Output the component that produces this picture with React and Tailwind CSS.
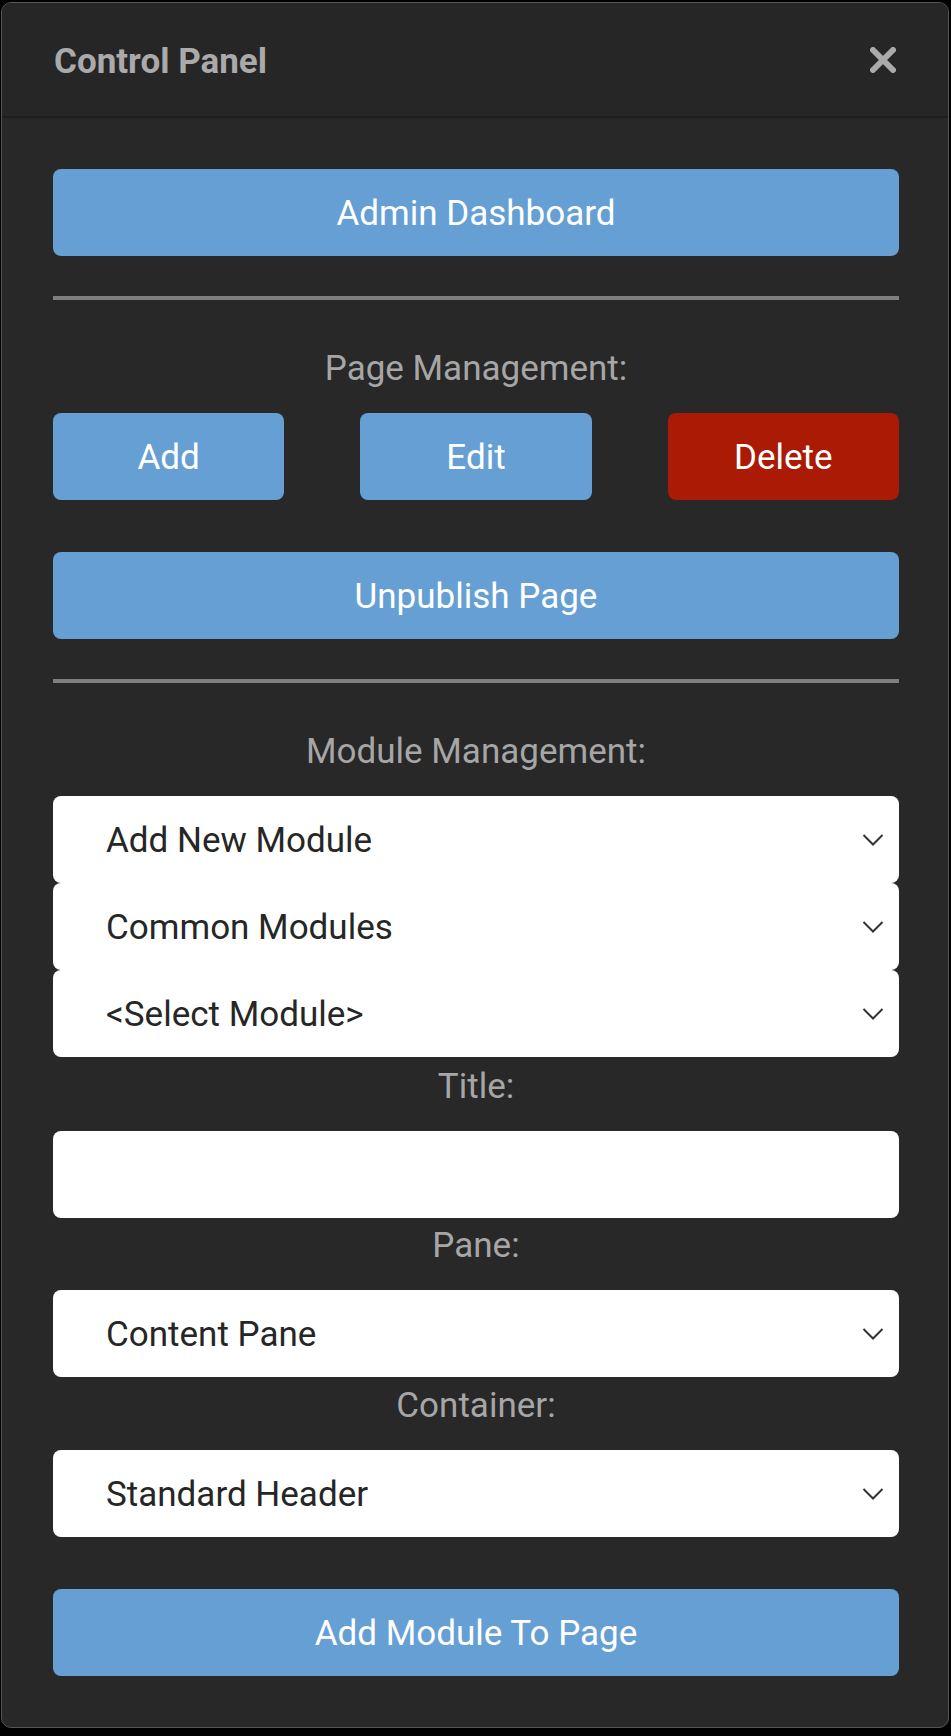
import React from 'react';

function Chevron() {
    return (
        <svg width="22" height="14" viewBox="0 0 22 14" className="shrink-0">
            <path d="M1.5 2 L11 11.5 L20.5 2" fill="none" stroke="#333333" strokeWidth="2" />
        </svg>
    );
}

function SelectBox({ label }) {
    return (
        <div className="h-[87px] bg-white rounded-[8px] flex items-center justify-between pl-[53px] pr-[15px] text-[#262626]">
            <span className="pt-[4px]">{label}</span>
            <Chevron />
        </div>
    );
}

function BlueButton({ children, className = '' }) {
    return (
        <div className={'h-[87px] pt-[4px] bg-[#659fd4] rounded-[8px] flex items-center justify-center text-white ' + className}>
            {children}
        </div>
    );
}

function Label({ children, className = '' }) {
    return (
        <div className={'h-[42px] pt-[4px] flex items-center justify-center text-[#a6a6a6] ' + className}>
            {children}
        </div>
    );
}

export default function App() {
    return (
        <div className="w-[951px] h-[1736px] bg-black pt-[2px] pl-[1px] font-['Roboto',sans-serif] text-[35px]">
            <div className="w-[948px] bg-[#282828] border border-[#555555] rounded-[10px] overflow-hidden">
                <div className="h-[115px] bg-[#262626] border-b-2 border-[#1e1e1e] flex items-center justify-between pl-[52px] pr-[52px]">
                    <span className="font-bold text-[#aaaaaa] pt-[6px]">Control Panel</span>
                    <svg width="26" height="26" viewBox="0 0 26 26">
                        <path d="M3 3 L23 23 M23 3 L3 23" stroke="#aaaaaa" strokeWidth="6" strokeLinecap="round" />
                    </svg>
                </div>
                <div className="pl-[51px] pr-[49px] pt-[51px] pb-[51px]">
                    <BlueButton>Admin Dashboard</BlueButton>
                    <div className="mt-[40px] h-[4px] bg-[#7f7f7f]" />
                    <Label className="mt-[46px]">Page Management:</Label>
                    <div className="mt-[25px] grid grid-cols-3 gap-x-[76px]">
                        <BlueButton>Add</BlueButton>
                        <BlueButton>Edit</BlueButton>
                        <div className="h-[87px] pt-[4px] bg-[#aa1a05] rounded-[8px] flex items-center justify-center text-white">
                            Delete
                        </div>
                    </div>
                    <BlueButton className="mt-[52px]">Unpublish Page</BlueButton>
                    <div className="mt-[40px] h-[4px] bg-[#7f7f7f]" />
                    <Label className="mt-[46px]">Module Management:</Label>
                    <div className="mt-[25px] flex flex-col">
                        <SelectBox label="Add New Module" />
                        <SelectBox label="Common Modules" />
                        <SelectBox label="<Select Module>" />
                    </div>
                    <Label className="mt-[7px]">Title:</Label>
                    <div className="mt-[25px] h-[87px] bg-white rounded-[8px]" />
                    <Label className="mt-[5px]">Pane:</Label>
                    <div className="mt-[25px]">
                        <SelectBox label="Content Pane" />
                    </div>
                    <Label className="mt-[6px]">Container:</Label>
                    <div className="mt-[25px]">
                        <SelectBox label="Standard Header" />
                    </div>
                    <BlueButton className="mt-[52px]">Add Module To Page</BlueButton>
                </div>
            </div>
        </div>
    );
}
